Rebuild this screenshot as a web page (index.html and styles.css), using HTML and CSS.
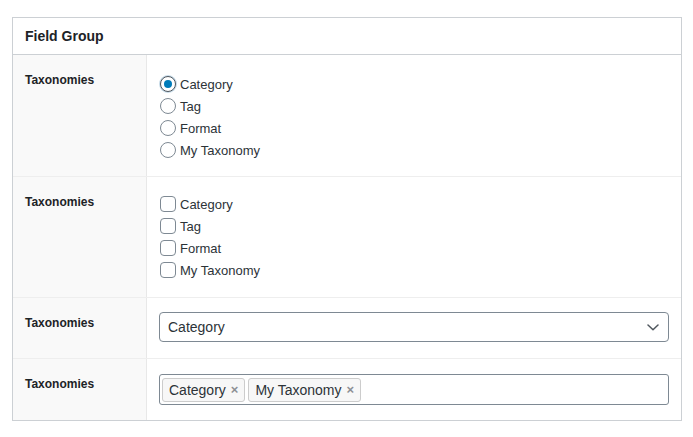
FILE: index.html
```html
<!DOCTYPE html>
<html>
<head>
<meta charset="utf-8">
<link rel="stylesheet" href="styles.css">
</head>
<body>
<div class="page">
  <div class="box">
    <div class="box-head">Field Group</div>
    <div class="row row-radio">
      <div class="label">Taxonomies</div>
      <div class="field">
        <ul class="choices radios">
          <li><label><input type="radio" name="t1" checked><span>Category</span></label></li>
          <li><label><input type="radio" name="t1"><span>Tag</span></label></li>
          <li><label><input type="radio" name="t1"><span>Format</span></label></li>
          <li><label><input type="radio" name="t1"><span>My Taxonomy</span></label></li>
        </ul>
      </div>
    </div>
    <div class="row row-check">
      <div class="label">Taxonomies</div>
      <div class="field">
        <ul class="choices checks">
          <li><label><input type="checkbox"><span>Category</span></label></li>
          <li><label><input type="checkbox"><span>Tag</span></label></li>
          <li><label><input type="checkbox"><span>Format</span></label></li>
          <li><label><input type="checkbox"><span>My Taxonomy</span></label></li>
        </ul>
      </div>
    </div>
    <div class="row row-select">
      <div class="label">Taxonomies</div>
      <div class="field">
        <div class="select">
          <span>Category</span>
          <svg class="chev" width="12" height="7" viewBox="0 0 12 7"><path d="M1 1 L6 5.8 L11 1" fill="none" stroke="#50575e" stroke-width="1.5" stroke-linecap="round" stroke-linejoin="round"/></svg>
        </div>
      </div>
    </div>
    <div class="row row-multi">
      <div class="label">Taxonomies</div>
      <div class="field">
        <div class="multi">
          <span class="tag">Category<span class="x">×</span></span>
          <span class="tag">My Taxonomy<span class="x">×</span></span>
        </div>
      </div>
    </div>
  </div>
</div>
</body>
</html>
```

FILE: styles.css
```css
* { box-sizing: border-box; }
html, body { margin: 0; padding: 0; background: #ffffff; }
body {
  font-family: "Liberation Sans", Arial, sans-serif;
  color: #1d2327;
}
.page {
  padding: 17px 0 0 12px;
}
.box {
  width: 670px;
  border: 1px solid #ccd0d4;
  background: #ffffff;
}
.box-head {
  height: 37px;
  line-height: 36px;
  padding: 0 12px;
  font-size: 14px;
  font-weight: bold;
  color: #1d2327;
  border-bottom: 1px solid #ccd0d4;
}
.row {
  display: grid;
  grid-template-columns: 134px 1fr;
  border-top: 1px solid #eeeeee;
}
.box-head + .row { border-top: 0; }
.label {
  background: #f9f9f9;
  border-right: 1px solid #e8e8e8;
  padding: 17px 12px 0 12px;
  font-size: 12px;
  line-height: 16px;
  font-weight: bold;
  color: #1d2327;
}
.field {
  padding: 15px 11px 15px 12px;
}
.row-check .field {
  padding-bottom: 16px;
}
.choices {
  list-style: none;
  margin: 0;
  padding: 0;
}
.radios { margin-top: 3px; }
.checks { margin-top: 1px; }
.choices li {
  height: 22px;
  display: flex;
  align-items: center;
}
.choices label {
  display: flex;
  align-items: center;
  gap: 4px;
  font-size: 13px;
  color: #2c3338;
}
.choices input {
  -webkit-appearance: none;
  appearance: none;
  margin: 0 0 0 1px;
  width: 16px;
  height: 16px;
  border: 1px solid #7e8993;
  background: #ffffff;
  flex: none;
  display: flex;
  align-items: center;
  justify-content: center;
}
.choices input[type=radio] { border-radius: 50%; }
.choices input[type=checkbox] { border-radius: 4px; }
.choices input[type=radio]:checked {
  border-color: #50575e;
  box-shadow: 0 0 0 1px #c7dbe8;
}
.choices input[type=radio]:checked::before {
  content: "";
  width: 8px;
  height: 8px;
  border-radius: 50%;
  background: #007cba;
}
.row-select .field {
  padding: 14px 11px 16px 12px;
}
.row-multi .field {
  padding: 15px 11px 15px 12px;
}
.select {
  height: 30px;
  width: 510px;
  border: 1px solid #7e8993;
  border-radius: 4px;
  display: flex;
  align-items: center;
  justify-content: space-between;
  padding: 0 8px 0 8px;
  font-size: 14px;
  color: #2c3338;
}
.chev { margin-right: 1px; }
.multi {
  height: 31px;
  width: 510px;
  border: 1px solid #7e8993;
  border-radius: 3px;
  display: flex;
  align-items: center;
  gap: 3px;
  padding: 0 2px;
}
.tag {
  height: 24px;
  display: flex;
  align-items: center;
  padding: 0 6px 0 6px;
  border: 1px solid #cccccc;
  border-radius: 3px;
  background: #f7f7f7;
  font-size: 14px;
  color: #2c3338;
}
.x {
  margin-left: 5px;
  color: #8c8f94;
  font-weight: bold;
  font-size: 13px;
}
```
